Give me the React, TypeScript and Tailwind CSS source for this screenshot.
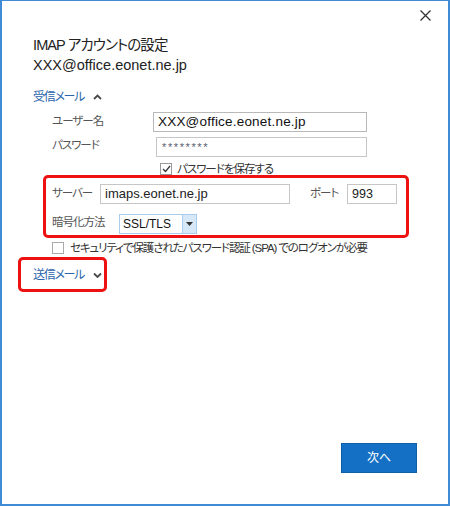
import React from "react";

const font = { fontFamily: '"Liberation Sans", "Noto Sans CJK JP", sans-serif' };

function Chevron({ up }: { up?: boolean }) {
  return (
    <svg width="9" height="6" viewBox="0 0 9 6" className="ml-[9px] shrink-0">
      {up ? (
        <path d="M1 5 L4.5 1.5 L8 5" fill="none" stroke="#4a4a4a" strokeWidth="1.8" />
      ) : (
        <path d="M1 1.5 L4.5 5 L8 1.5" fill="none" stroke="#4a4a4a" strokeWidth="1.8" />
      )}
    </svg>
  );
}

export default function App() {
  return (
    <div
      className="w-[450px] h-[506px] bg-white border-[#3f8bd6] border-l-2 border-t border-r-2 border-b-2 text-[#222] [font-feature-settings:'palt']"
      style={font}
    >
      <div className="h-[34px] flex justify-end pt-[9px] pr-[17px]">
        <svg width="11" height="11" viewBox="0 0 11 11">
          <path d="M0.5 0.5 L10.5 10.5 M10.5 0.5 L0.5 10.5" stroke="#333" strokeWidth="1.3" />
        </svg>
      </div>
      <div className="pl-[31px]">
        <div className="text-[14.5px] leading-[20px] text-[#222] tracking-[-0.9px]">IMAP アカウントの設定</div>
        <div className="text-[14.5px] leading-[20px] text-[#222]">XXX@office.eonet.ne.jp</div>

        <div className="flex items-center h-[18px] mt-[13px] text-[12px] leading-[18px] tracking-[-1.3px] text-[#2b65ab]">
          受信メール
          <Chevron up />
        </div>

        <div className="pl-[19px] text-[11.5px] leading-[16px] tracking-[-1px] text-[#555]">
          <div className="flex items-center h-[20px] mt-[6px]">
            <div className="w-[101px] -mt-[2px]">ユーザー名</div>
            <div className="w-[214px] h-[20px] border border-[#b9b9b9] flex items-center pl-[4px] text-[13.5px] leading-[18px] text-[#111] tracking-[0.2px]">
              XXX@office.eonet.ne.jp
            </div>
          </div>
          <div className="flex items-center h-[20px] mt-[5px]">
            <div className="w-[104px] -mt-[4px]">パスワード</div>
            <div className="w-[211px] h-[20px] border border-[#c6c6c6] flex items-center pl-[5px] text-[11px] text-[#5a6070] tracking-[1.6px]">
              ********
            </div>
          </div>
          <div className="flex items-center h-[12px] mt-[6px] pl-[108px]">
            <div className="w-[12px] h-[12px] border border-[#9a9a9a] flex items-center justify-center shrink-0">
              <svg width="9" height="8" viewBox="0 0 9 8">
                <path d="M1 4 L3.5 6.5 L8 1" fill="none" stroke="#333" strokeWidth="1.2" />
              </svg>
            </div>
            <div className="ml-[5px] text-[#333] whitespace-nowrap">パスワードを保存する</div>
          </div>
        </div>
      </div>

      <div className="ml-[41px] w-[366px] h-[63px] border-[3px] border-[#ee1111] rounded-[5px] pl-[6px] pt-[6px] text-[11.5px] leading-[16px] tracking-[-1px] text-[#555]">
        <div className="flex items-center h-[20px]">
          <div className="w-[48px] -mt-[3px]">サーバー</div>
          <div className="w-[190px] h-[20px] border border-[#c6c6c6] flex items-center pl-[4px] text-[13px] leading-[18px] tracking-normal text-[#222]">
            imaps.eonet.ne.jp
          </div>
          <div className="w-[57px] pl-[20px] -mt-[3px]">ポート</div>
          <div className="w-[50px] h-[20px] border border-[#c6c6c6] flex items-center pl-[4px] text-[12.5px] leading-[18px] tracking-normal text-[#222]">
            993
          </div>
        </div>
        <div className="flex items-center h-[20px] mt-[10px]">
          <div className="w-[67px] -mt-[4px]">暗号化方法</div>
          <div className="w-[78px] h-[20px] border border-[#a9cbec] flex items-stretch tracking-normal">
            <div className="flex-1 bg-white flex items-center pl-[3px] text-[12px] leading-[18px] text-[#111]">SSL/TLS</div>
            <div className="w-[14px] border-l border-[#a9cbec] bg-[#d6e8f8] flex items-center justify-center">
              <svg width="7" height="4" viewBox="0 0 7 4">
                <path d="M0 0 L7 0 L3.5 4 Z" fill="#333" />
              </svg>
            </div>
          </div>
        </div>
      </div>

      <div className="flex items-center ml-[50px] mt-[4px] h-[12px]">
        <div className="w-[12px] h-[12px] border border-[#aaa] shrink-0" />
        <div className="ml-[6px] text-[11.5px] leading-[16px] tracking-[-1.1px] text-[#333] whitespace-nowrap">セキュリティで保護されたパスワード認証 (SPA) でのログオンが必要</div>
      </div>

      <div className="ml-[16px] mt-[3px] w-[89px] h-[35px] border-[3px] border-[#ee1111] rounded-[5px] flex items-center pl-[12px] text-[12px] leading-[18px] tracking-[-1.3px] text-[#2b65ab] whitespace-nowrap">
        <span>送信メール</span>
        <Chevron />
      </div>

      <div className="flex justify-end pr-[31px] mt-[151px]">
        <div className="w-[76px] h-[30px] bg-[#1470c4] border border-[#0f5ea8] flex items-center justify-center text-white text-[12px] leading-[16px]">
          次へ
        </div>
      </div>
    </div>
  );
}
